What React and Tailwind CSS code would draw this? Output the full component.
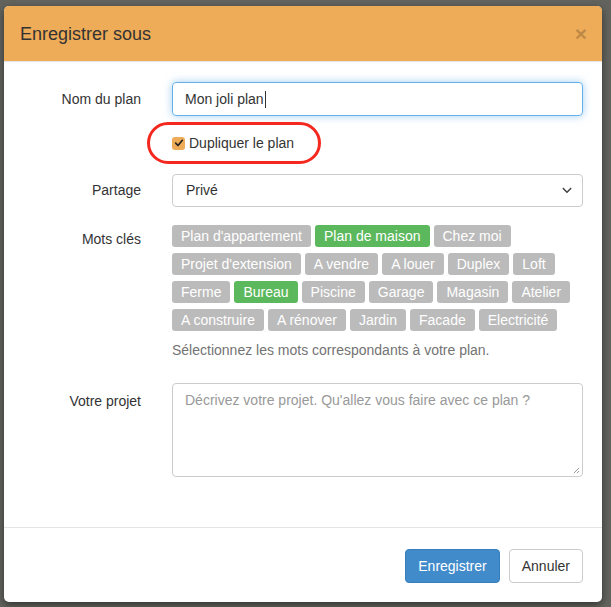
const FONT = { fontFamily: '"Liberation Sans", Arial, Helvetica, sans-serif' };

const TAG_ROWS = [
  [["Plan d'appartement", false], ["Plan de maison", true], ["Chez moi", false]],
  [["Projet d'extension", false], ["A vendre", false], ["A louer", false], ["Duplex", false], ["Loft", false]],
  [["Ferme", false], ["Bureau", true], ["Piscine", false], ["Garage", false], ["Magasin", false], ["Atelier", false]],
  [["A construire", false], ["A rénover", false], ["Jardin", false], ["Facade", false], ["Electricité", false]],
];

function Label({ children, className = "" }) {
  return (
    <div className={`w-[137px] shrink-0 text-right text-[14px] text-[#333] ${className}`}>{children}</div>
  );
}

export default function App() {
  return (
    <div style={FONT} className="h-[607px] w-[611px] overflow-hidden bg-[#64645f] pt-[6px] pl-[4px]">
      {/* Modal */}
      <div className="w-[598px] h-[596px] bg-white rounded-[5px] overflow-hidden shadow-[0_3px_9px_rgba(0,0,0,0.5)] flex flex-col">
        {/* Header */}
        <div className="h-[56px] shrink-0 bg-[#efac58] flex items-center justify-between pl-[16px] pr-[15px] border-b border-[#e5e5e5]">
          <h4 className="text-[18px] leading-none text-[#333]">Enregistrer sous</h4>
          <span className="text-[21px] font-bold leading-none text-black opacity-20">×</span>
        </div>

        {/* Body */}
        <div className="flex-1 pt-[20px]">
          {/* Nom du plan */}
          <div className="flex items-center gap-[31px]">
            <Label>Nom du plan</Label>
            <div className="w-[411px] h-[34px] rounded-[4px] border border-[#66afe9] shadow-[0_0_8px_rgba(102,175,233,0.6)] flex items-center px-[12px] text-[14px] text-[#333]">
              Mon joli plan
              <span className="ml-[1px] inline-block w-px h-[17px] bg-[#333]" />
            </div>
          </div>

          {/* Dupliquer */}
          <div className="relative flex items-center h-[54px] pl-[168px]">
            <div className="absolute left-[143px] top-[6px] w-[174px] h-[42px] rounded-full border-[3px] border-[#f5281f]" />
            <span className="w-[13px] h-[13px] rounded-[3px] bg-[#efac58] flex items-center justify-center">
              <svg viewBox="0 0 12 12" className="w-[10px] h-[10px]">
                <path d="M2 6.2 L4.8 9 L10 2.8" fill="none" stroke="#222" strokeWidth="2" strokeLinecap="round" strokeLinejoin="round" />
              </svg>
            </span>
            <span className="ml-[4px] text-[14px] text-[#333]">Dupliquer le plan</span>
          </div>

          {/* Partage */}
          <div className="flex items-center gap-[31px] mt-[4px]">
            <Label>Partage</Label>
            <div className="w-[411px] h-[33px] rounded-[4px] border border-[#ccc] flex items-center justify-between pl-[13px] pr-[10px] text-[14px] text-[#333]">
              <span>Privé</span>
              <svg viewBox="0 0 12 8" className="w-[10px] h-[7px]">
                <path d="M1.5 1.5 L6 6 L10.5 1.5" fill="none" stroke="#444" strokeWidth="1.8" strokeLinecap="round" strokeLinejoin="round" />
              </svg>
            </div>
          </div>

          {/* Mots clés */}
          <div className="flex items-start gap-[31px] mt-[18px]">
            <Label className="pt-[4px]">Mots clés</Label>
            <div className="w-[411px]">
              <div className="flex flex-col gap-[6px]">
                {TAG_ROWS.map((row, i) => (
                  <div key={i} className="flex gap-[4px]">
                    {row.map(([t, on]) => (
                      <span
                        key={t}
                        className={`h-[22px] px-[9px] rounded-[3px] flex items-center text-[14px] text-white ${on ? "bg-[#5cb85c]" : "bg-[#bbb]"}`}
                      >
                        {t}
                      </span>
                    ))}
                  </div>
                ))}
              </div>
              <p className="mt-[9px] text-[14px] leading-[20px] text-[#737373]">
                Sélectionnez les mots correspondants à votre plan.
              </p>
            </div>
          </div>

          {/* Votre projet */}
          <div className="flex items-start gap-[31px] mt-[23px]">
            <Label className="pt-[8px]">Votre projet</Label>
            <div className="relative w-[411px] h-[94px] rounded-[4px] border border-[#ccc] px-[12px] pt-[6px] text-[14px] text-[#999]">
              Décrivez votre projet. Qu'allez vous faire avec ce plan ?
              <svg viewBox="0 0 8 8" className="absolute right-[2px] bottom-[2px] w-[7px] h-[7px]">
                <path d="M7 1 L1 7 M7 4.5 L4.5 7" stroke="#888" strokeWidth="1" />
              </svg>
            </div>
          </div>
        </div>

        {/* Footer */}
        <div className="h-[75px] shrink-0 border-t border-[#e5e5e5] flex items-center justify-end gap-[9px] pr-[19px] pt-[2px]">
          <button className="h-[34px] px-[12px] rounded-[4px] bg-[#428bca] border border-[#357ebd] text-white text-[14px]">
            Enregistrer
          </button>
          <button className="h-[34px] px-[12px] rounded-[4px] bg-white border border-[#ccc] text-[#333] text-[14px]">
            Annuler
          </button>
        </div>
      </div>
    </div>
  );
}
